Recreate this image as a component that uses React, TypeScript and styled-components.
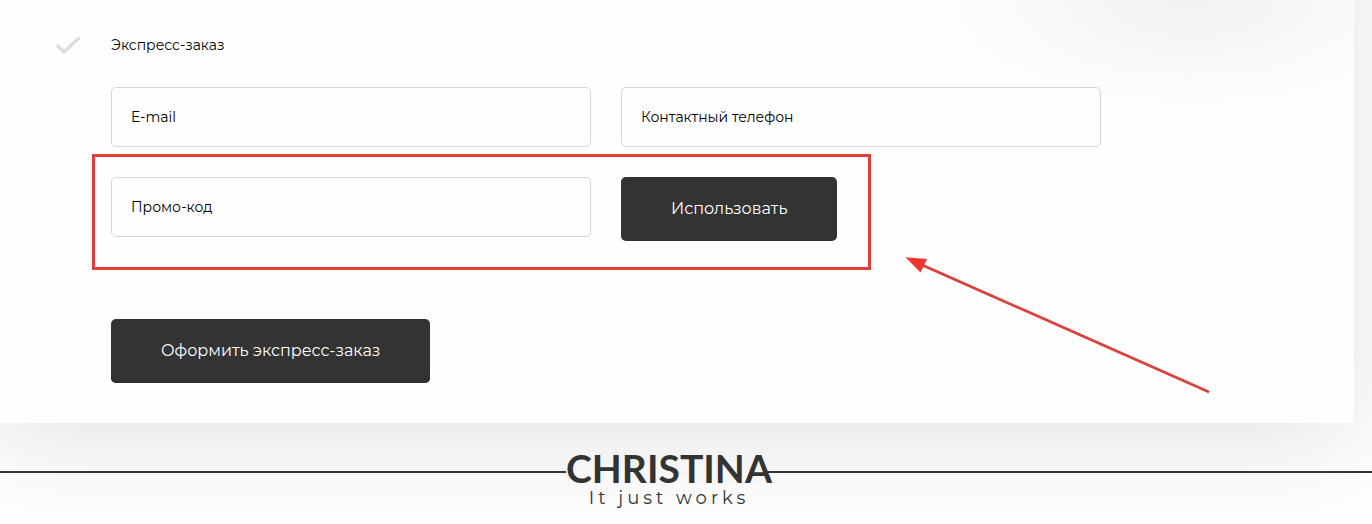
import React from "react";
import styled, { createGlobalStyle } from "styled-components";

const GlobalStyle = createGlobalStyle`
  *, *::before, *::after { box-sizing: border-box; }
  body {
    margin: 0;
    background: #fefefe;
    color: #000;
    font: 400 14px/20px Montserrat, Inter, "Liberation Sans", sans-serif;
  }
`;

const Page = styled.div`
  display: flex;
  flex-direction: column;
  overflow: hidden;
`;

const Card = styled.form`
  margin: -120px 18px 0 -16px;
  padding: 155px 32px 40px 72px;
  border-radius: 4px;
  background:
    radial-gradient(
      ellipse 310px 136px at calc(100% - 164px) 120px,
      #f4f1f2 0%,
      #f5f2f3 16%,
      #f7f5f6 30%,
      #f9f9f9 46%,
      #fcfcfc 66%,
      #fdfdfd 84%,
      #fefefe 100%
    );
  box-shadow: 0 20px 100px -6px rgba(40, 10, 20, 0.12);
`;

const Option = styled.label`
  display: grid;
  grid-template-columns: 24px 1fr;
  align-items: center;
  column-gap: 31px;
`;

const HiddenCheckbox = styled.input`
  position: absolute;
  opacity: 0;
  width: 24px;
  height: 20px;
  margin: 0;
`;

const Fields = styled.div`
  display: flex;
  flex-direction: column;
  gap: 30px;
  max-width: 1045px;
  padding: 32px 0 0 55px;
`;

const FieldRow = styled.div`
  position: relative;
  display: grid;
  grid-template-columns: 1fr 1fr;
  align-items: start;
  justify-items: start;
  gap: 30px;
`;

const TextField = styled.input`
  width: 100%;
  height: 60px;
  padding: 0 19px;
  border: 1px solid #d6d6d6;
  border-radius: 5px;
  background: transparent;
  color: #000;
  font: inherit;

  &::placeholder {
    color: #000;
    opacity: 1;
  }
`;

const Button = styled.button<{ $edge?: boolean }>`
  height: 64px;
  padding: 0 50px;
  border: 0;
  border-radius: 5px;
  background: #333;
  box-shadow: ${(p) => (p.$edge ? "inset 0 -4px 0 #303030" : "none")};
  color: #fff;
  font: inherit;
  font-size: 16px;
  white-space: nowrap;
`;

const Submit = styled.div`
  display: flex;
  padding-top: 48px;
`;

const Highlight = styled.div`
  position: absolute;
  top: -23px;
  left: -19px;
  width: 779px;
  height: 116px;
  border: 3px solid #e0403b;
  pointer-events: none;
`;

const Arrow = styled.svg`
  position: absolute;
  top: 80px;
  left: 794px;
  pointer-events: none;
`;

const Footer = styled.footer`
  display: grid;
  grid-template-columns: 1fr auto 1fr;
  margin-left: -34px;
  padding-top: 25px;
`;

const Rule = styled.div<{ $tucked?: boolean }>`
  height: 2px;
  margin-top: 23px;
  margin-left: ${(p) => (p.$tucked ? "-6px" : "0")};
  background: #333;
`;

const Brand = styled.div`
  display: flex;
  flex-direction: column;
  align-items: center;
  color: #333;
`;

const BrandName = styled.div`
  font: 700 39px/40px Lato, "Liberation Sans", sans-serif;
`;

const Tagline = styled.div`
  font: 400 18px/20px Montserrat, Inter, "Liberation Sans", sans-serif;
  letter-spacing: 4px;
  padding-bottom: 16px;
`;

export default function App() {
  return (
    <>
      <GlobalStyle />
      <Page>
        <Card onSubmit={(e) => e.preventDefault()}>
          <Option>
            <HiddenCheckbox type="checkbox" defaultChecked />
            <svg width="24" height="20" viewBox="0 0 24 20" aria-hidden="true">
              <path
                d="M1.8 11 L8.2 17 L22.4 3.4"
                fill="none"
                stroke="#dcdcdc"
                strokeWidth="3.2"
                strokeLinecap="round"
              />
            </svg>
            Экспресс-заказ
          </Option>
          <Fields>
            <FieldRow>
              <TextField type="email" placeholder="E-mail" aria-label="E-mail" />
              <TextField type="tel" placeholder="Контактный телефон" aria-label="Контактный телефон" />
            </FieldRow>
            <FieldRow>
              <TextField type="text" placeholder="Промо-код" aria-label="Промо-код" />
              <Button type="button">Использовать</Button>
              <Highlight />
              <Arrow width="306" height="138" viewBox="0 0 306 138" aria-hidden="true">
                <path d="M16 7.5 L304 135" stroke="#dc403b" strokeWidth="2.8" fill="none" />
                <path d="M0.5 0.3 L22 2 L15.5 15.5 Z" fill="#ee3530" />
              </Arrow>
            </FieldRow>
            <Submit>
              <Button type="submit" $edge>Оформить экспресс-заказ</Button>
            </Submit>
          </Fields>
        </Card>
        <Footer>
          <Rule />
          <Brand>
            <BrandName>CHRISTINA</BrandName>
            <Tagline>It just works</Tagline>
          </Brand>
          <Rule $tucked />
        </Footer>
      </Page>
    </>
  );
}
